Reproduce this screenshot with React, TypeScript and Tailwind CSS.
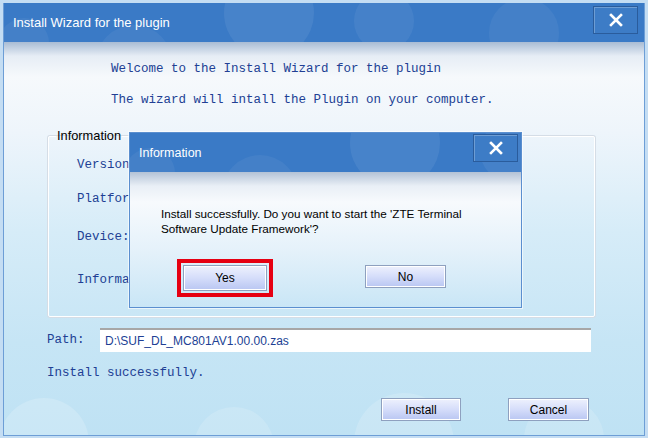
const mono = "font-['Liberation_Mono',monospace] text-[12.5px] leading-[16px] text-[#213f94]";
const sans = "font-['Liberation_Sans',Arial,sans-serif]";

function CloseButton({ className }: { className: string }) {
  return (
    <div className={`flex items-center justify-center border border-[#2a5c9c] shadow-[inset_1px_1px_0_rgba(255,255,255,0.25)] bg-[#3d7cc6] ${className}`}>
      <svg width="14" height="14" viewBox="0 0 14 14">
        <path d="M2 2 L12 12 M12 2 L2 12" stroke="#ffffff" strokeWidth="2.6" strokeLinecap="square" />
      </svg>
    </div>
  );
}

function Bubbles() {
  return (
    <svg className="absolute inset-0 h-full w-full" preserveAspectRatio="none">
      <circle cx="130" cy="60" r="38" fill="#ffffff" fillOpacity="0.05" />
      <circle cx="265" cy="10" r="45" fill="#ffffff" fillOpacity="0.07" />
      <circle cx="380" cy="18" r="30" fill="#ffffff" fillOpacity="0.06" />
      <circle cx="520" cy="30" r="35" fill="#ffffff" fillOpacity="0.05" />
      <circle cx="20" cy="40" r="25" fill="#ffffff" fillOpacity="0.05" />
    </svg>
  );
}

function WinButton({ label, className }: { label: string; className: string }) {
  return (
    <div
      className={`flex items-center justify-center border border-[#8ea0bf] bg-gradient-to-b from-[#eef1fd] via-[#d5ddfa] to-[#b9c6f2] shadow-[inset_1px_1px_0_#ffffff,inset_-1px_-1px_0_#ffffff] text-[12px] text-black ${sans} ${className}`}
    >
      {label}
    </div>
  );
}

export default function App() {
  return (
    <div className="w-[648px] h-[438px] bg-[#c4ddf3] px-[3px] pt-[3px] pb-[2px]">
      <div className="relative flex h-full flex-col border-x border-b border-[#6d9ed6]">
        {/* title bar */}
        <div className="relative h-[39px] shrink-0 overflow-hidden bg-[#3a7ac6]">
          <Bubbles />
          <div className={`absolute left-[9px] top-[10px] text-[13px] text-white ${sans}`}>Install Wizard for the plugin</div>
          <CloseButton className="absolute right-[6px] top-[3px] h-[28px] w-[45px]" />
        </div>

        {/* body */}
        <div className="relative flex-1 overflow-hidden bg-[linear-gradient(to_bottom,#a8bcd4_0px,#e6edf5_14px,#f6f9fc_35px,#eef5fb_90px,#d6ecf8_190px,#c6e5f5_300px,#bfe2f4_100%)]">
          <svg className="absolute bottom-0 left-0 h-[70px] w-full">
            <circle cx="40" cy="78" r="45" fill="#ffffff" fillOpacity="0.18" />
            <circle cx="230" cy="82" r="40" fill="#ffffff" fillOpacity="0.15" />
            <circle cx="400" cy="78" r="50" fill="#ffffff" fillOpacity="0.16" />
            <circle cx="560" cy="74" r="40" fill="#ffffff" fillOpacity="0.15" />
          </svg>

          <div className="relative flex flex-col">
            <p className={`${mono} ml-[107px] mt-[19px]`}>Welcome to the Install Wizard for the plugin</p>
            <p className={`${mono} ml-[107px] mt-[15px]`}>The wizard will intall the Plugin on your computer.</p>

            <fieldset className="ml-[44px] mt-[21px] h-[188px] w-[547px] rounded-[2px] border border-[#ffffff] shadow-[0_0_0_1px_#d5dde6]">
              <legend className={`ml-[7px] px-[1px] text-[12.8px] leading-[14px] text-black ${sans}`}>Information</legend>
              <div className="flex flex-col pl-[28px]">
                <p className={`${mono} mt-[14px]`}>Version</p>
                <p className={`${mono} mt-[18px]`}>Platfor</p>
                <p className={`${mono} mt-[22px]`}>Device:</p>
                <p className={`${mono} mt-[27px]`}>Informa</p>
              </div>
            </fieldset>

            <div className="ml-[43px] mt-[11px] flex items-center">
              <span className={`${mono} w-[53px]`}>Path:</span>
              <div className={`flex h-[24px] w-[491px] items-center border-t-2 border-[#a7a7a7] bg-white pl-[5px] text-[12px] text-[#213f94] ${sans}`}>
                D:\SUF_DL_MC801AV1.00.00.zas
              </div>
            </div>

            <p className={`${mono} ml-[43px] mt-[13px]`}>Install successfully.</p>

            <div className="ml-[377px] mt-[17px] flex gap-[47px]">
              <WinButton label="Install" className="h-[23px] w-[80px]" />
              <WinButton label="Cancel" className="h-[23px] w-[81px]" />
            </div>
          </div>
        </div>

        {/* information dialog */}
        <div className="absolute left-[125px] top-[129px] flex h-[176px] w-[393px] flex-col border border-[#5b8fcf] shadow-[0_0_0_1px_rgba(255,255,255,0.6)]">
          <div className="relative h-[39px] shrink-0 overflow-hidden bg-[#3a7ac6]">
            <Bubbles />
            <div className={`absolute left-[9px] top-[11px] text-[12.5px] text-white ${sans}`}>Information</div>
            <CloseButton className="absolute right-[3px] top-[1px] h-[28px] w-[45px]" />
          </div>
          <div className="relative flex flex-1 flex-col bg-[linear-gradient(to_bottom,#b3c2d6_0px,#e9eff6_14px,#f7fafd_30px,#e4f1fa_80px,#c9e6f6_100%)]">
            <p className={`ml-[31px] mt-[34px] text-[11.7px] leading-[15px] text-black ${sans}`}>
              Install successfully. Do you want to start the 'ZTE Terminal
              <br />
              Software Update Framework'?
            </p>
            <div className="ml-[47px] mt-[23px] flex items-start">
              <div className="border-[4px] border-[#e60012] p-[2px]">
                <WinButton label="Yes" className="h-[26px] w-[84px]" />
              </div>
              <WinButton label="No" className="ml-[92px] mt-[6px] h-[23px] w-[81px]" />
            </div>
          </div>
        </div>
      </div>
    </div>
  );
}
